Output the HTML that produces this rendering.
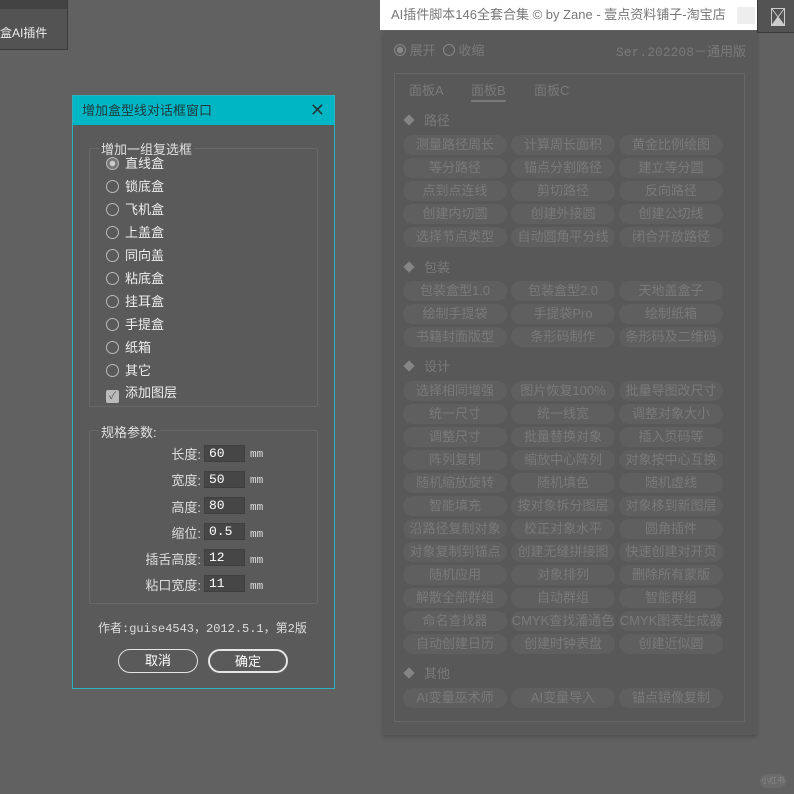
<!DOCTYPE html>
<html><head><meta charset="utf-8"><style>
*{margin:0;padding:0;box-sizing:border-box}
body{width:794px;height:794px;background:#616161;position:relative;overflow:hidden;font-family:"Liberation Sans","Noto Sans CJK SC",sans-serif;}
.abs{position:absolute}
.tl{left:0;top:0;width:68px;height:50px;background:#535353;border:1px solid #3a3a3a;border-top:none;border-left:none}
.tl .bar{height:9px;background:#434343}
.panel{left:383px;top:31px;width:374px;height:704px;background:#595959;box-shadow:0 2px 4px rgba(0,0,0,.2)}
.ptitle{left:380px;top:0;width:377px;height:30px;background:#fff;color:#777;font-size:13px;line-height:30px;padding-left:11px}
.inner{left:394px;top:73px;width:351px;height:649px;border:1px solid #666;background:#585858}
.btns{display:grid;grid-template-columns:104px 104px 104px;column-gap:4px;row-gap:3px;position:absolute;left:403px}
.btns div{height:20px;border-radius:10px;background:#5f5f5f;color:#7a7a7a;font-size:13px;line-height:20px;text-align:center;white-space:nowrap;overflow:hidden}
.sec{position:absolute;left:405px;color:#7a7a7a;font-size:13px}
.sec b{display:inline-block;width:8px;height:8px;background:#858585;transform:rotate(45deg);margin-right:11px;vertical-align:1px}
.dlg{left:72px;top:95px;width:263px;height:594px;background:#5a5a5a;border:1px solid #2ab3be}
.dt{height:29px;background:#00b6c4;color:#1d3a3d;font-size:13px;line-height:29px;padding-left:9px;position:relative}
.box{position:absolute;border:1px solid #686868;border-radius:2px}
.lg{position:absolute;color:#e0e0e0;font-size:13px;background:#5a5a5a;padding:0 2px}
.it{position:absolute;left:106px;color:#eee;font-size:13px;height:16px;line-height:16px}
.it i{display:inline-block;width:13px;height:13px;border:1px solid #bbb;border-radius:50%;vertical-align:-2px;margin-right:6px}
.inp{position:absolute;left:204px;width:41px;height:17px;background:#464646;border:1px solid #3f3f3f;color:#fff;font-family:"Liberation Mono",monospace;font-size:13px;padding-left:4px;line-height:15px}
.mm{position:absolute;left:250px;color:#ddd;font-size:11px;font-family:"Liberation Mono",monospace}
.lab{position:absolute;right:593px;color:#ddd;font-size:13px;text-align:right;width:120px}
.bt{position:absolute;top:649px;width:80px;height:24px;border:1.5px solid #e5e5e5;border-radius:12px;color:#fff;font-size:13px;text-align:center;line-height:21px}
</style></head><body>
<div class="abs tl"><div class="bar"></div><div style="color:#eee;font-size:12px;margin-top:15px">盒AI插件</div></div>
<div class="abs" style="left:757px;top:0;width:37px;height:33px;background:#535353;border-left:1px solid #3a3a3a;border-bottom:1px solid #3a3a3a"><svg width="14" height="18" style="position:absolute;left:13px;top:8px"><rect x="0.5" y="0.5" width="13" height="17" fill="none" stroke="#ccc"/><path d="M1 1L13 17M13 1L1 17M1 17L7 9L13 17Z" stroke="#ccc" fill="#ccc"/></svg></div>
<div class="abs panel"></div>
<div class="abs ptitle">AI插件脚本146全套合集 © by Zane - 壹点资料铺子-淘宝店<span style="position:absolute;left:357px;top:7px;width:18px;height:17px;background:#eee"></span></div>
<div class="abs" style="left:394px;top:40px;color:#7a7a7a;font-size:13px"><span style="display:inline-block;width:12px;height:12px;border-radius:50%;border:1px solid #888;background:radial-gradient(#888 3px,transparent 3.5px);vertical-align:-1px"></span> 展开 &nbsp;<span style="display:inline-block;width:12px;height:12px;border-radius:50%;border:1px solid #888;vertical-align:-1px"></span> 收缩</div>
<div class="abs" style="left:616px;top:41px;color:#7a7a7a;font-size:13px;font-family:'Liberation Mono','Noto Sans CJK SC',monospace">Ser.202208－通用版</div>
<div class="abs inner"></div>
<div class="abs" style="left:409px;top:80px;color:#7a7a7a;font-size:13px">面板A</div>
<div class="abs" style="left:471px;top:80px;color:#7a7a7a;font-size:13px;border-bottom:2px solid #7a7a7a;padding-bottom:1px">面板B</div>
<div class="abs" style="left:534px;top:80px;color:#7a7a7a;font-size:13px">面板C</div>
<div class="sec" style="top:110px"><b></b>路径</div>
<div class="btns" style="top:135px"><div>测量路径周长</div><div>计算周长面积</div><div>黄金比例绘图</div><div>等分路径</div><div>锚点分割路径</div><div>建立等分圆</div><div>点到点连线</div><div>剪切路径</div><div>反向路径</div><div>创建内切圆</div><div>创建外接圆</div><div>创建公切线</div><div>选择节点类型</div><div>自动圆角平分线</div><div>闭合开放路径</div></div>
<div class="sec" style="top:257px"><b></b>包装</div>
<div class="btns" style="top:281px"><div>包装盒型1.0</div><div>包装盒型2.0</div><div>天地盖盒子</div><div>绘制手提袋</div><div>手提袋Pro</div><div>绘制纸箱</div><div>书籍封面版型</div><div>条形码制作</div><div>条形码及二维码</div></div>
<div class="sec" style="top:356px"><b></b>设计</div>
<div class="btns" style="top:381px"><div>选择相同增强</div><div>图片恢复100%</div><div>批量导图改尺寸</div><div>统一尺寸</div><div>统一线宽</div><div>调整对象大小</div><div>调整尺寸</div><div>批量替换对象</div><div>插入页码等</div><div>阵列复制</div><div>缩放中心阵列</div><div>对象按中心互换</div><div>随机缩放旋转</div><div>随机填色</div><div>随机虚线</div><div>智能填充</div><div>按对象拆分图层</div><div>对象移到新图层</div><div>沿路径复制对象</div><div>校正对象水平</div><div>圆角插件</div><div>对象复制到锚点</div><div>创建无缝拼接图</div><div>快速创建对开页</div><div>随机应用</div><div>对象排列</div><div>删除所有蒙版</div><div>解散全部群组</div><div>自动群组</div><div>智能群组</div><div>命名查找器</div><div>CMYK查找潘通色</div><div>CMYK图表生成器</div><div>自动创建日历</div><div>创建时钟表盘</div><div>创建近似圆</div></div>
<div class="sec" style="top:663px"><b></b>其他</div>
<div class="btns" style="top:688px"><div>AI变量巫术师</div><div>AI变量导入</div><div>锚点镜像复制</div></div>
<div class="abs" style="left:760px;top:774px;width:26px;height:14px;border-radius:7px;background:#6a6a6a;color:#888;font-size:8px;text-align:center;line-height:14px">小红书</div>

<div class="abs dlg"><div class="dt">增加盒型线对话框窗口<span style="position:absolute;right:9px;top:0;font-size:18px;color:#1d3a3d;font-weight:300">✕</span></div></div>
<div class="box" style="left:89px;top:148px;width:229px;height:259px"></div>
<div class="lg" style="left:99px;top:139px">增加一组复选框</div>
<div class="it" style="top:156px"><i style="background:radial-gradient(#ccc 2.5px,#777 3px)"></i>直线盒</div>
<div class="it" style="top:179px"><i></i>锁底盒</div>
<div class="it" style="top:202px"><i></i>飞机盒</div>
<div class="it" style="top:225px"><i></i>上盖盒</div>
<div class="it" style="top:248px"><i></i>同向盖</div>
<div class="it" style="top:271px"><i></i>粘底盒</div>
<div class="it" style="top:294px"><i></i>挂耳盒</div>
<div class="it" style="top:317px"><i></i>手提盒</div>
<div class="it" style="top:340px"><i></i>纸箱</div>
<div class="it" style="top:363px"><i></i>其它</div>
<div class="it" style="top:385px"><i style="border-radius:2px;background:#bbb;color:#555;font-size:10px;line-height:11px;text-align:center;font-style:normal">✓</i>添加图层</div>
<div class="box" style="left:89px;top:430px;width:229px;height:174px"></div>
<div class="lg" style="left:99px;top:422px">规格参数:</div>
<div class="lab" style="top:444px">长度:</div><div class="inp" style="top:445px">60</div><div class="mm" style="top:449px">mm</div>
<div class="lab" style="top:470px">宽度:</div><div class="inp" style="top:471px">50</div><div class="mm" style="top:475px">mm</div>
<div class="lab" style="top:497px">高度:</div><div class="inp" style="top:497px">80</div><div class="mm" style="top:502px">mm</div>
<div class="lab" style="top:523px">缩位:</div><div class="inp" style="top:523px">0.5</div><div class="mm" style="top:529px">mm</div>
<div class="lab" style="top:549px">插舌高度:</div><div class="inp" style="top:549px">12</div><div class="mm" style="top:555px">mm</div>
<div class="lab" style="top:575px">粘口宽度:</div><div class="inp" style="top:575px">11</div><div class="mm" style="top:581px">mm</div>
<div class="abs" style="left:98px;top:619px;color:#ddd;font-size:12px;font-family:'Liberation Mono','Noto Sans CJK SC',monospace;white-space:nowrap">作者:guise4543，2012.5.1，第2版</div>
<div class="bt" style="left:118px">取消</div>
<div class="bt" style="left:208px;border-width:2px">确定</div>
</body></html>
